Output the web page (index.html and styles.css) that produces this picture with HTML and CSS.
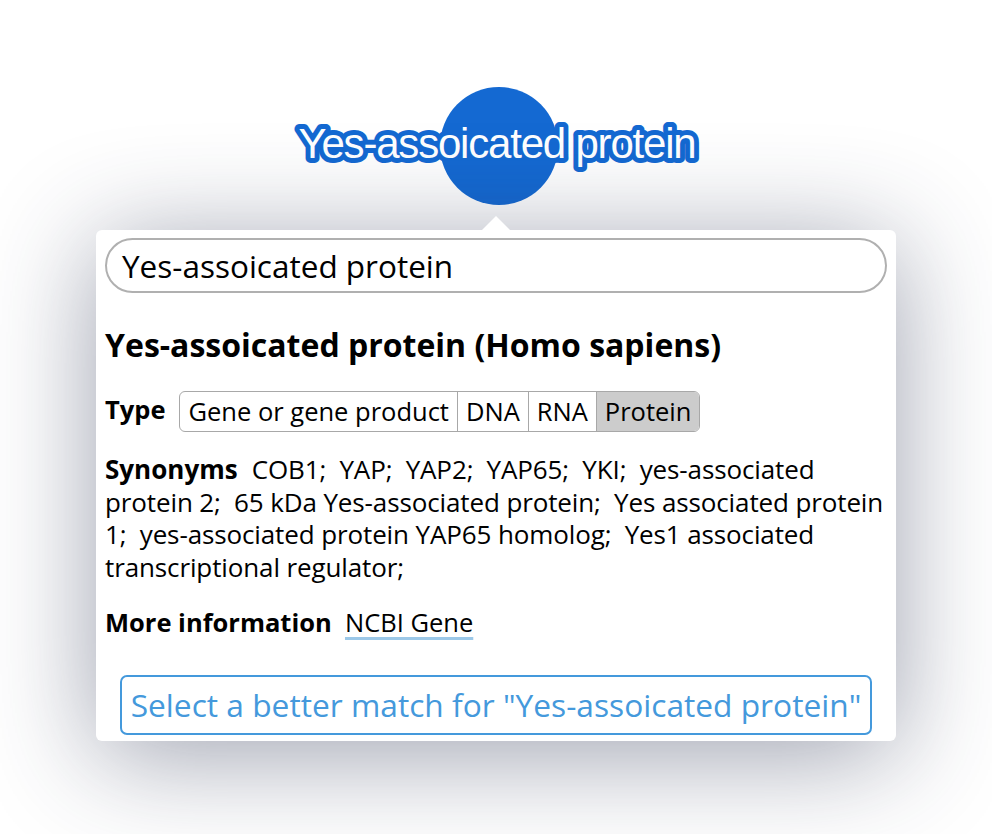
FILE: index.html
```html
<!DOCTYPE html>
<html>
<head>
<meta charset="utf-8">
<link rel="stylesheet" href="styles.css">
</head>
<body>
<div class="stage">
  <div class="node">
    <div class="node-circle"></div>
    <svg class="node-label" width="992" height="118" viewBox="0 0 992 118">
      <text x="497" y="71" text-anchor="middle" class="label-text">Yes-assoicated protein</text>
    </svg>
  </div>
  <div class="card">
    <div class="search">Yes-assoicated protein</div>
    <h1 class="title">Yes-assoicated protein (Homo sapiens)</h1>
    <div class="type-row">
      <span class="label">Type</span>
      <div class="seg">
        <span class="seg-item">Gene or gene product</span>
        <span class="seg-item">DNA</span>
        <span class="seg-item">RNA</span>
        <span class="seg-item active">Protein</span>
      </div>
    </div>
    <p class="synonyms"><span class="label syn-label">Synonyms</span>COB1;&nbsp; YAP;&nbsp; YAP2;&nbsp; YAP65;&nbsp; YKI;&nbsp; yes-associated protein 2;&nbsp; 65 kDa Yes-associated protein;&nbsp; Yes associated protein 1;&nbsp; yes-associated protein YAP65 homolog;&nbsp; Yes1 associated transcriptional regulator;</p>
    <p class="more"><span class="label">More information</span>&nbsp; <a class="link">NCBI Gene</a></p>
    <div class="btn-wrap"><div class="btn">Select a better match for "Yes-assoicated protein"</div></div>
  </div>
</div>
</body>
</html>
```
FILE: styles.css
```css
html, body {
  margin: 0;
  padding: 0;
  background: #ffffff;
}
body {
  width: 992px;
  height: 834px;
  overflow: hidden;
  font-family: "Open Sans", "Noto Sans", sans-serif;
  color: #000;
}
.stage {
  padding-top: 87px;
}
.node {
  position: relative;
  height: 118px;
}
.node-circle {
  width: 118px;
  height: 118px;
  border-radius: 50%;
  background: #1469d2;
  margin-left: 440px;
}
.node-label {
  position: absolute;
  left: 0;
  top: 0;
}
.label-text {
  font-family: "Liberation Sans", Arial, sans-serif;
  font-size: 42px;
  letter-spacing: -1.2px;
  fill: #ffffff;
  stroke: #1469d2;
  stroke-width: 10px;
  stroke-linejoin: round;
  paint-order: stroke fill;
}
.card {
  position: relative;
  width: 800px;
  margin: 25px auto 0;
  box-sizing: border-box;
  padding: 8px 9px 6px;
  background: #fff;
  border-radius: 6px;
  box-shadow: 0 14px 110px rgba(35, 45, 75, 0.45);
}
.card::before {
  content: "";
  position: absolute;
  top: -14px;
  left: 386px;
  border-left: 14px solid transparent;
  border-right: 14px solid transparent;
  border-bottom: 14px solid #fff;
}
.search {
  height: 51px;
  border: 2px solid #b0b0b0;
  border-radius: 28px;
  padding-left: 15px;
  font-size: 31.5px;
  line-height: 51px;
}
.title {
  margin: 32px 0 0;
  font-size: 32px;
  font-weight: 700;
  line-height: 40px;
}
.label {
  font-weight: 700;
}
.type-row {
  display: flex;
  align-items: center;
  margin-top: 26px;
  font-size: 25.5px;
}
.type-row .label {
  margin-right: 14px;
  margin-top: -6px;
}
.seg {
  display: flex;
  border: 1.5px solid #a8a8a8;
  border-radius: 6px;
  overflow: hidden;
}
.seg-item {
  padding: 0 8px;
  line-height: 39px;
  border-left: 1.5px solid #a8a8a8;
}
.seg-item:first-child {
  border-left: none;
}
.seg-item.active {
  background: #cccccc;
}
.synonyms {
  margin: 21px 0 0;
  font-size: 26px;
  line-height: 32.5px;
  letter-spacing: -0.12px;
}
.syn-label {
  letter-spacing: 0;
  margin-right: 14px;
}
.more {
  margin: 23px 0 0;
  font-size: 25.5px;
  line-height: 32.5px;
}
.link {
  text-decoration: underline;
  text-decoration-color: #9cc8e8;
  text-decoration-thickness: 3px;
  text-underline-offset: 5px;
}
.btn-wrap {
  display: flex;
  justify-content: center;
  margin-top: 36px;
}
.btn {
  border: 2px solid #4499dc;
  border-radius: 7px;
  color: #4499dc;
  font-size: 31.7px;
  line-height: 56px;
  padding: 0 9px;
}
```
